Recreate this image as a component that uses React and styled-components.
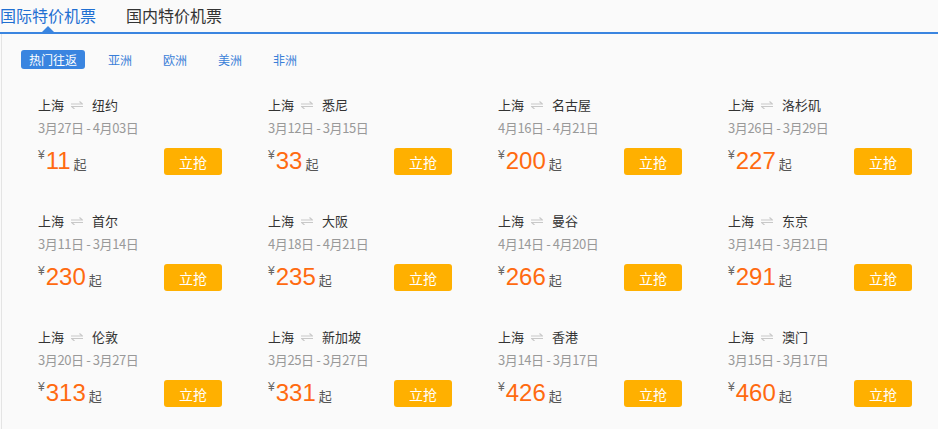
import React from "react";
import styled, { createGlobalStyle } from "styled-components";

const Global = createGlobalStyle`
  html, body { margin: 0; padding: 0; background: #fafafa; }
  body { font-family: "Noto Sans CJK SC", "Noto Sans", sans-serif; color: #333; }
`;

const Page = styled.div`
  width: 938px;
  height: 429px;
  background: #fafafa;
  overflow: hidden;
`;

const TabBar = styled.div`
  display: flex;
  gap: 30px;
  height: 32px;
  border-bottom: 2px solid #3a85e0;
`;

const Tab = styled.div`
  position: relative;
  font-size: 16px;
  line-height: 30px;
  height: 32px;
  color: ${(p) => (p.$active ? "#1f6fd2" : "#333")};
  white-space: nowrap;
  &::after {
    content: "";
    display: ${(p) => (p.$active ? "block" : "none")};
    position: absolute;
    left: 50%;
    bottom: 0;
    margin-left: -6px;
    border-left: 6px solid transparent;
    border-right: 6px solid transparent;
    border-bottom: 6px solid #3a85e0;
  }
`;

const Panel = styled.div`
  margin-left: 1px;
  border-left: 1px solid #e4e4e4;
  padding: 16px 0 0 0;
  height: 400px;
`;

const Filters = styled.div`
  display: flex;
  align-items: center;
  padding-left: 19px;
  gap: 15px;
`;

const Pill = styled.div`
  height: 19px;
  line-height: 19px;
  font-size: 12px;
  border-radius: 3px;
  padding: 0 8px;
  background: ${(p) => (p.$active ? "#3a85e0" : "transparent")};
  color: ${(p) => (p.$active ? "#fff" : "#3a7fd8")};
`;

const Grid = styled.div`
  display: grid;
  grid-template-columns: repeat(4, 184px);
  column-gap: 46px;
  row-gap: 36px;
  padding: 26px 0 0 36px;
`;

const Card = styled.div`
  display: flex;
  flex-direction: column;
`;

const Route = styled.div`
  display: flex;
  align-items: center;
  font-size: 13px;
  line-height: 20px;
  color: #333;
`;

const Arrow = styled.svg`
  margin: 0 9px 0 7px;
  display: block;
`;

const Dates = styled.div`
  margin-top: 3px;
  font-size: 13px;
  line-height: 20px;
  color: #999;
  letter-spacing: -0.4px;
`;

const PriceRow = styled.div`
  margin-top: 10px;
  display: flex;
  align-items: center;
  justify-content: space-between;
  height: 27px;
`;

const Price = styled.div`
  display: flex;
  align-items: baseline;
  margin-top: -2px;
`;

const Yen = styled.span`
  font-family: "Liberation Sans", sans-serif;
  font-size: 12px;
  color: #666;
  align-self: flex-start;
  margin-top: 1px;
  margin-right: 1px;
`;

const Amount = styled.span`
  font-family: "Liberation Sans", sans-serif;
  font-size: 24px;
  line-height: 27px;
  color: #ff6a10;
  margin-right: 3px;
`;

const From = styled.span`
  font-size: 13px;
  color: #555;
`;

const Buy = styled.button`
  width: 58px;
  height: 27px;
  border: 0;
  border-radius: 3px;
  background: #ffb000;
  color: #fff;
  font-family: "Noto Sans CJK SC", sans-serif;
  font-size: 14px;
  padding: 0;
  cursor: pointer;
`;

const tabs = ["国际特价机票", "国内特价机票"];
const regions = ["热门往返", "亚洲", "欧洲", "美洲", "非洲"];

const flights = [
  ["纽约", "3月27日 - 4月03日", "11"],
  ["悉尼", "3月12日 - 3月15日", "33"],
  ["名古屋", "4月16日 - 4月21日", "200"],
  ["洛杉矶", "3月26日 - 3月29日", "227"],
  ["首尔", "3月11日 - 3月14日", "230"],
  ["大阪", "4月18日 - 4月21日", "235"],
  ["曼谷", "4月14日 - 4月20日", "266"],
  ["东京", "3月14日 - 3月21日", "291"],
  ["伦敦", "3月20日 - 3月27日", "313"],
  ["新加坡", "3月25日 - 3月27日", "331"],
  ["香港", "3月14日 - 3月17日", "426"],
  ["澳门", "3月15日 - 3月17日", "460"],
];

const SwapIcon = () => (
  <Arrow width="12" height="8" viewBox="0 0 12 8" fill="none" stroke="#c8c8c8" strokeWidth="1.2">
    <path d="M0 3H11.5L8.5 0.5" />
    <path d="M12 5.5H0.5L3.5 8" />
  </Arrow>
);

export default function App() {
  return (
    <Page>
      <Global />
      <TabBar>
        {tabs.map((t, i) => (
          <Tab key={t} $active={i === 0}>{t}</Tab>
        ))}
      </TabBar>
      <Panel>
        <Filters>
          {regions.map((r, i) => (
            <Pill key={r} $active={i === 0}>{r}</Pill>
          ))}
        </Filters>
        <Grid>
          {flights.map(([dest, dates, price]) => (
            <Card key={dest}>
              <Route>
                <span>上海</span>
                <SwapIcon />
                <span>{dest}</span>
              </Route>
              <Dates>{dates}</Dates>
              <PriceRow>
                <Price>
                  <Yen>¥</Yen>
                  <Amount>{price}</Amount>
                  <From>起</From>
                </Price>
                <Buy>立抢</Buy>
              </PriceRow>
            </Card>
          ))}
        </Grid>
      </Panel>
    </Page>
  );
}
